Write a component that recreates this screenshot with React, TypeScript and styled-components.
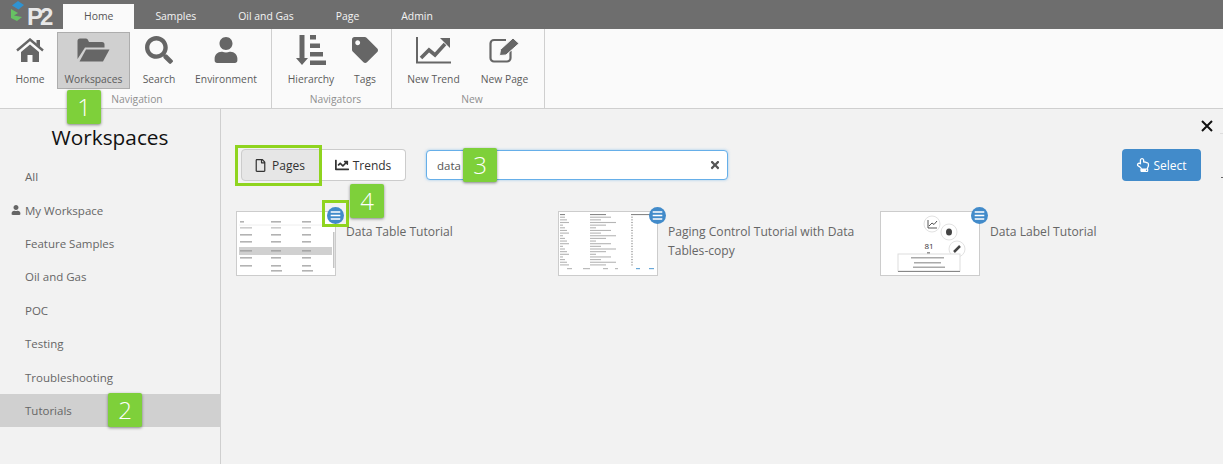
import React, { ReactElement } from 'react';
import styled, { createGlobalStyle } from 'styled-components';
import { FaSearch, FaUser, FaTag, FaChartLine, FaRegFile, FaRegHandPointUp, FaTimes, FaBars } from 'react-icons/fa';

const GlobalStyle = createGlobalStyle`
  html, body {
    margin: 0;
    padding: 0;
    height: 100%;
    overflow: hidden;
    background: #f2f2f2;
    font-family: "Open Sans", "Liberation Sans", sans-serif;
    color: #5c5c5c;
  }
`;

const Page = styled.div`
  position: relative;
  width: 1223px;
  height: 464px;
  display: flex;
  flex-direction: column;
  overflow: hidden;
`;

const TabBar = styled.div`
  height: 29px;
  background: #6e6e6e;
  display: flex;
  align-items: flex-end;
  flex-shrink: 0;
`;

const LogoWrap = styled.div`
  width: 63px;
  height: 29px;
  position: relative;
  flex-shrink: 0;
`;

const LogoText = styled.span`
  position: absolute;
  left: 27px;
  top: 5px;
  font-family: "Liberation Sans", sans-serif;
  font-size: 24px;
  line-height: 24px;
  font-weight: 700;
  letter-spacing: -3px;
  color: #e8e8e8;
`;

const Tab = styled.div<{ active?: boolean }>`
  height: 25px;
  line-height: 25px;
  padding: 0 21px;
  font-size: 10.4px;
  color: ${(props) => (props.active ? '#555' : '#f4f4f4')};
  background: ${(props) => (props.active ? '#fafafa' : 'transparent')};
`;

const Ribbon = styled.div`
  height: 79px;
  background: #fafafa;
  border-bottom: 1px solid #cfcfcf;
  display: flex;
  flex-shrink: 0;
`;

const RibbonGroup = styled.div<{ width: number; pad: number }>`
  width: ${(props) => props.width}px;
  padding-left: ${(props) => props.pad}px;
  box-sizing: border-box;
  border-right: 1px solid #cfcfcf;
  display: flex;
  flex-direction: column;
`;

const RibbonButtons = styled.div`
  display: flex;
  padding-top: 3px;
  height: 57px;
`;

const RibbonButton = styled.div<{ width: number; active?: boolean }>`
  width: ${(props) => props.width}px;
  box-sizing: border-box;
  display: flex;
  flex-direction: column;
  align-items: center;
  padding-top: 2px;
  font-size: 10.3px;
  color: #5c5c5c;
  white-space: nowrap;
  background: ${(props) => (props.active ? '#d0d0d0' : 'transparent')};
  border: 1px solid ${(props) => (props.active ? '#adadad' : 'transparent')};
`;

const IconSlot = styled.div`
  height: 30px;
  display: flex;
  align-items: center;
  justify-content: center;
  color: #666;
`;

const ButtonLabel = styled.span`
  margin-top: 7px;
  line-height: 14px;
`;

const GroupLabel = styled.div`
  text-align: center;
  font-size: 10.3px;
  line-height: 14px;
  margin-top: 3px;
  color: #8f8f8f;
`;

const Body = styled.div`
  flex: 1;
  display: flex;
  min-height: 0;
`;

const Sidebar = styled.div`
  width: 221px;
  box-sizing: border-box;
  border-right: 1px solid #cfcfcf;
  flex-shrink: 0;
`;

const SidebarTitle = styled.div`
  text-align: center;
  font-size: 20.8px;
  line-height: 30px;
  color: #111;
  padding-top: 13px;
  margin-bottom: 8px;
`;

const SideItem = styled.div<{ active?: boolean }>`
  height: 33.4px;
  padding-left: 25px;
  font-size: 11.5px;
  display: flex;
  align-items: center;
  color: #666;
  background: ${(props) => (props.active ? '#d0d0d0' : 'transparent')};
`;

const SideIcon = styled.span`
  display: inline-flex;
  width: 14px;
  margin-left: -14px;
  color: #666;
`;

const Main = styled.div`
  flex: 1;
  display: flex;
  flex-direction: column;
  min-width: 0;
`;

const CloseRow = styled.div`
  height: 40px;
  display: flex;
  justify-content: flex-end;
  padding: 11px 10px 0 0;
  box-sizing: border-box;
`;

const Toolbar = styled.div`
  display: flex;
  align-items: center;
  padding: 0 22px 0 20px;
`;

const ToggleGroup = styled.div`
  display: flex;
  height: 32px;
`;

const ToggleButton = styled.div<{ active?: boolean; side: 'left' | 'right' }>`
  display: flex;
  align-items: center;
  justify-content: center;
  gap: ${(props) => (props.side === 'left' ? 5 : 4)}px;
  box-sizing: border-box;
  width: ${(props) => (props.side === 'left' ? 80 : 85)}px;
  padding-right: ${(props) => (props.side === 'left' ? 3 : 0)}px;
  font-size: 12px;
  color: #333;
  background: ${(props) => (props.active ? '#e6e6e6' : '#fff')};
  border: 1px solid #ccc;
  border-left-width: ${(props) => (props.side === 'left' ? 1 : 0)}px;
  border-radius: ${(props) => (props.side === 'left' ? '4px 0 0 4px' : '0 4px 4px 0')};
`;

const SearchBox = styled.div`
  width: 302px;
  height: 30px;
  box-sizing: border-box;
  margin-left: 20px;
  padding: 0 6px 0 10px;
  display: flex;
  align-items: center;
  justify-content: space-between;
  background: #fff;
  border: 1px solid #66afe9;
  border-radius: 4px;
  box-shadow: 0 0 3px rgba(102, 175, 233, 0.6);
  font-size: 11.5px;
  color: #555;
`;

const SelectButton = styled.div`
  margin-left: auto;
  width: 79px;
  height: 32px;
  box-sizing: border-box;
  display: flex;
  align-items: center;
  justify-content: center;
  gap: 3px;
  background: #428bca;
  border-radius: 4px;
  font-size: 12px;
  color: #fff;
`;

const CardRow = styled.div`
  display: flex;
  padding: 30px 0 0 15px;
`;

const Card = styled.div`
  width: 322px;
  display: flex;
  gap: 10px;
`;

const Thumb = styled.div`
  position: relative;
  width: 100px;
  height: 65px;
  box-sizing: border-box;
  background: #fff;
  border: 1px solid #ccc;
  flex-shrink: 0;
`;

const MenuDot = styled.div`
  position: absolute;
  top: -5px;
  right: -9px;
  width: 17px;
  height: 17px;
  border-radius: 50%;
  background: #428bca;
  color: #fff;
  display: flex;
  align-items: center;
  justify-content: center;
`;

const CardTitle = styled.div`
  width: 205px;
  margin-top: 11px;
  font-size: 12.1px;
  line-height: 19px;
  color: #666;
`;

const Badge = styled.div<{ x: number; y: number }>`
  position: absolute;
  left: ${(props) => props.x}px;
  top: ${(props) => props.y}px;
  width: 34px;
  height: 34px;
  border-radius: 2px;
  background: #7ed03a;
  box-shadow: 0 1px 3px rgba(0, 0, 0, 0.45);
  color: #fff;
  font-size: 24px;
  font-weight: 300;
  line-height: 34px;
  text-align: center;
`;

const Outline = styled.div<{ x: number; y: number; w: number; h: number }>`
  position: absolute;
  left: ${(props) => props.x}px;
  top: ${(props) => props.y}px;
  width: ${(props) => props.w}px;
  height: ${(props) => props.h}px;
  box-sizing: border-box;
  border: 3px solid #8fd41f;
`;

const EdgeTick = styled.div<{ y: number; dark?: boolean }>`
  position: absolute;
  right: 0;
  top: ${(props) => props.y}px;
  width: ${(props) => (props.dark ? 2 : 3)}px;
  height: 1px;
  background: ${(props) => (props.dark ? '#666' : '#ddd')};
`;

const Logo = () => (
  <LogoWrap>
    <svg width="27" height="29" viewBox="0 0 27 29">
      <path d="M12 5.5 L18 1 L24 5 L18.5 9.5 Z" fill="#2f93d1" />
      <path d="M11 9 L18 13 L14 15.5 L22 17 L17 21 L11 18 Z" fill="#67c163" />
    </svg>
    <LogoText>P2</LogoText>
  </LogoWrap>
);

const HomeIcon = () => (
  <svg width="28" height="24" viewBox="0 0 28 24" fill="#666">
    <path d="M1 12.5 L14 1.5 L27 12.5" fill="none" stroke="#666" strokeWidth="2.4" />
    <path d="M20.5 2 H24 V9 L20.5 6 Z" />
    <path d="M5 14 L14 6.5 L23 14 V24 H16.5 V17 H11.5 V24 H5 Z" />
  </svg>
);

const FolderIcon = () => (
  <svg width="33" height="24" viewBox="0 0 33 24" fill="#666">
    <path d="M0.5 21 V3 a2.5 2.5 0 0 1 2.5 -2.5 H9 a2 2 0 0 1 2 1.5 L12 4 H25 a2.5 2.5 0 0 1 2.5 2.5 V9.5 H8 Z" />
    <path d="M9 11.5 H32.5 L26 23.5 H2.5 Z" />
  </svg>
);

const HierarchyIcon = () => (
  <svg width="30" height="30" viewBox="0 0 30 30" fill="#666">
    <path d="M3.5 0 H8.5 V23 H12 L6 30 L0 23 H3.5 Z" />
    <rect x="14" y="0" width="6" height="4.5" />
    <rect x="14" y="8.5" width="10" height="4.5" />
    <rect x="14" y="17" width="13" height="4.5" />
    <rect x="14" y="25.5" width="16" height="4.5" />
  </svg>
);

const TrendIcon = () => (
  <svg width="35" height="27" viewBox="0 0 35 27" fill="none" stroke="#666">
    <path d="M1 0 V25.5 H35" strokeWidth="2" />
    <path d="M5 21 L13 13 L19 18 L29 7" strokeWidth="3.6" />
    <path d="M24 1 H34 V11 Z" fill="#666" stroke="none" />
  </svg>
);

const NewPageIcon = () => (
  <svg width="32" height="26" viewBox="0 0 32 26" fill="none" stroke="#666">
    <path
      d="M17 3 H5 a3.5 3.5 0 0 0 -3.5 3.5 V21 a3.5 3.5 0 0 0 3.5 3.5 H18 a3.5 3.5 0 0 0 3.5 -3.5 V14"
      strokeWidth="2.2"
    />
    <path d="M10.5 18.5 L11.5 12.5 L24 1 L30 6.5 L17 18 Z" fill="#666" stroke="#fafafa" strokeWidth="1" />
  </svg>
);

const CloseIcon = () => (
  <svg width="12" height="12" viewBox="0 0 12 12" stroke="#111" strokeWidth="2">
    <path d="M1 1 L11 11 M11 1 L1 11" />
  </svg>
);

const TableThumb = () => (
  <svg width="98" height="63" viewBox="0 0 98 63">
    <rect x="2" y="35" width="93" height="8" fill="#d0d0d0" />
    <rect x="96" y="20" width="1.5" height="36" fill="#c4c4c4" />
    <path d="M2 13 H95" stroke="#eee" />
    {[9, 15, 22, 29, 38, 45, 53].map((y) => (
      <g key={y} fill="#999" opacity={y === 15 ? 0.5 : 0.75}>
        <rect x="3" y={y} width={y === 9 ? 4 : 12} height="1.6" />
        <rect x="34" y={y} width="10" height="1.6" />
        <rect x="65" y={y} width="9" height="1.6" />
      </g>
    ))}
    <rect x="34" y="58" width="11" height="1.6" fill="#999" opacity="0.75" />
    <rect x="65" y="58" width="11" height="1.6" fill="#999" opacity="0.75" />
  </svg>
);

const ListThumb = () => (
  <svg width="98" height="63" viewBox="0 0 98 63">
    {Array.from({ length: 20 }).map((_, i) => (
      <g key={i} fill={i === 0 ? '#888' : '#b5b5b5'}>
        <rect x="1" y={2 + i * 2.65} width={i === 0 ? 5 : 3 + (i % 4) * 2} height="1.1" />
        <rect x="31" y={2 + i * 2.65} width={i === 0 ? 16 : 6 + ((i * 3) % 5) * 5} height="1.1" />
        <rect x="72" y={2 + i * 2.65} width={i === 0 ? 20 : 2} height="1.1" />
      </g>
    ))}
    <g fill="#bbb">
      <rect x="8" y="56" width="5" height="1.2" />
      <rect x="24" y="56" width="7" height="1.2" />
      <rect x="44" y="56" width="5" height="1.2" />
      <rect x="56" y="56" width="3" height="1.2" />
    </g>
    <rect x="77" y="56" width="4" height="1.2" fill="#6aa8d8" />
    <rect x="90" y="56" width="5" height="1.2" fill="#6aa8d8" />
  </svg>
);

const LabelThumb = () => (
  <svg width="98" height="63" viewBox="0 0 98 63">
    <circle cx="51" cy="12" r="8" fill="#fff" stroke="#e2e2e2" />
    <path d="M47 8 V16 H56 M48 14 L51 11 L53 12.5 L56 9" fill="none" stroke="#555" />
    <circle cx="68" cy="20" r="8" fill="#fff" stroke="#e2e2e2" />
    <ellipse cx="68" cy="20" rx="3" ry="3.6" fill="#444" />
    <circle cx="76" cy="37" r="8" fill="#fff" stroke="#e2e2e2" />
    <path d="M73 40 L79 34" stroke="#444" strokeWidth="2.5" />
    <text x="48" y="37" fontSize="8" textAnchor="middle" fill="#333">81</text>
    <path d="M46 41 H49" stroke="#333" />
    <rect x="17" y="42" width="62" height="17" fill="#fff" stroke="#ddd" />
    <rect x="30" y="45" width="33" height="1.5" fill="#aaa" />
    <rect x="33" y="50" width="27" height="1.5" fill="#aaa" />
    <rect x="32" y="54.5" width="32" height="1.5" fill="#aaa" />
    <rect x="17" y="59" width="62" height="1" fill="#888" />
  </svg>
);

const NavButton = ({
  icon,
  label,
  width,
  active
}: {
  icon: ReactElement;
  label: string;
  width: number;
  active?: boolean;
}) => (
  <RibbonButton width={width} active={active}>
    <IconSlot>{icon}</IconSlot>
    <ButtonLabel>{label}</ButtonLabel>
  </RibbonButton>
);

const PageCard = ({ title, thumb }: { title: string; thumb: ReactElement }) => (
  <Card>
    <Thumb>
      {thumb}
      <MenuDot>
        <FaBars size={11} />
      </MenuDot>
    </Thumb>
    <CardTitle>{title}</CardTitle>
  </Card>
);

const workspaces = [
  'All',
  'My Workspace',
  'Feature Samples',
  'Oil and Gas',
  'POC',
  'Testing',
  'Troubleshooting',
  'Tutorials'
];

const App = () => (
  <Page>
    <GlobalStyle />
    <TabBar>
      <Logo />
      <Tab active>Home</Tab>
      <Tab>Samples</Tab>
      <Tab>Oil and Gas</Tab>
      <Tab>Page</Tab>
      <Tab>Admin</Tab>
    </TabBar>
    <Ribbon>
      <RibbonGroup width={272} pad={3}>
        <RibbonButtons>
          <NavButton icon={<HomeIcon />} label="Home" width={54} />
          <NavButton icon={<FolderIcon />} label="Workspaces" width={73} active />
          <NavButton icon={<FaSearch size={28} />} label="Search" width={58} />
          <NavButton icon={<FaUser size={26} />} label="Environment" width={76} />
        </RibbonButtons>
        <GroupLabel>Navigation</GroupLabel>
      </RibbonGroup>
      <RibbonGroup width={120} pad={8}>
        <RibbonButtons>
          <NavButton icon={<HierarchyIcon />} label="Hierarchy" width={62} />
          <NavButton icon={<FaTag size={26} />} label="Tags" width={46} />
        </RibbonButtons>
        <GroupLabel>Navigators</GroupLabel>
      </RibbonGroup>
      <RibbonGroup width={153} pad={8}>
        <RibbonButtons>
          <NavButton icon={<TrendIcon />} label="New Trend" width={67} />
          <NavButton icon={<NewPageIcon />} label="New Page" width={75} />
        </RibbonButtons>
        <GroupLabel>New</GroupLabel>
      </RibbonGroup>
    </Ribbon>
    <Body>
      <Sidebar>
        <SidebarTitle>Workspaces</SidebarTitle>
        {workspaces.map((name) => (
          <SideItem key={name} active={name === 'Tutorials'}>
            {name === 'My Workspace' && (
              <SideIcon>
                <FaUser size={10} />
              </SideIcon>
            )}
            {name}
          </SideItem>
        ))}
      </Sidebar>
      <Main>
        <CloseRow>
          <CloseIcon />
        </CloseRow>
        <Toolbar>
          <ToggleGroup>
            <ToggleButton side="left" active>
              <FaRegFile size={13} />
              Pages
            </ToggleButton>
            <ToggleButton side="right">
              <FaChartLine size={14} />
              Trends
            </ToggleButton>
          </ToggleGroup>
          <SearchBox>
            data
            <FaTimes size={12} color="#555" />
          </SearchBox>
          <SelectButton>
            <FaRegHandPointUp size={14} />
            Select
          </SelectButton>
        </Toolbar>
        <CardRow>
          <PageCard title="Data Table Tutorial" thumb={<TableThumb />} />
          <PageCard title="Paging Control Tutorial with Data Tables-copy" thumb={<ListThumb />} />
          <PageCard title="Data Label Tutorial" thumb={<LabelThumb />} />
        </CardRow>
      </Main>
    </Body>
    <Outline x={235} y={145} w={87} h={41} />
    <Outline x={322} y={200} w={27} h={27} />
    <Badge x={67} y={90}>1</Badge>
    <Badge x={108} y={393}>2</Badge>
    <Badge x={463} y={148}>3</Badge>
    <Badge x={350} y={184}>4</Badge>
    <EdgeTick y={133} />
    <EdgeTick y={177} dark />
  </Page>
);

export default App;
